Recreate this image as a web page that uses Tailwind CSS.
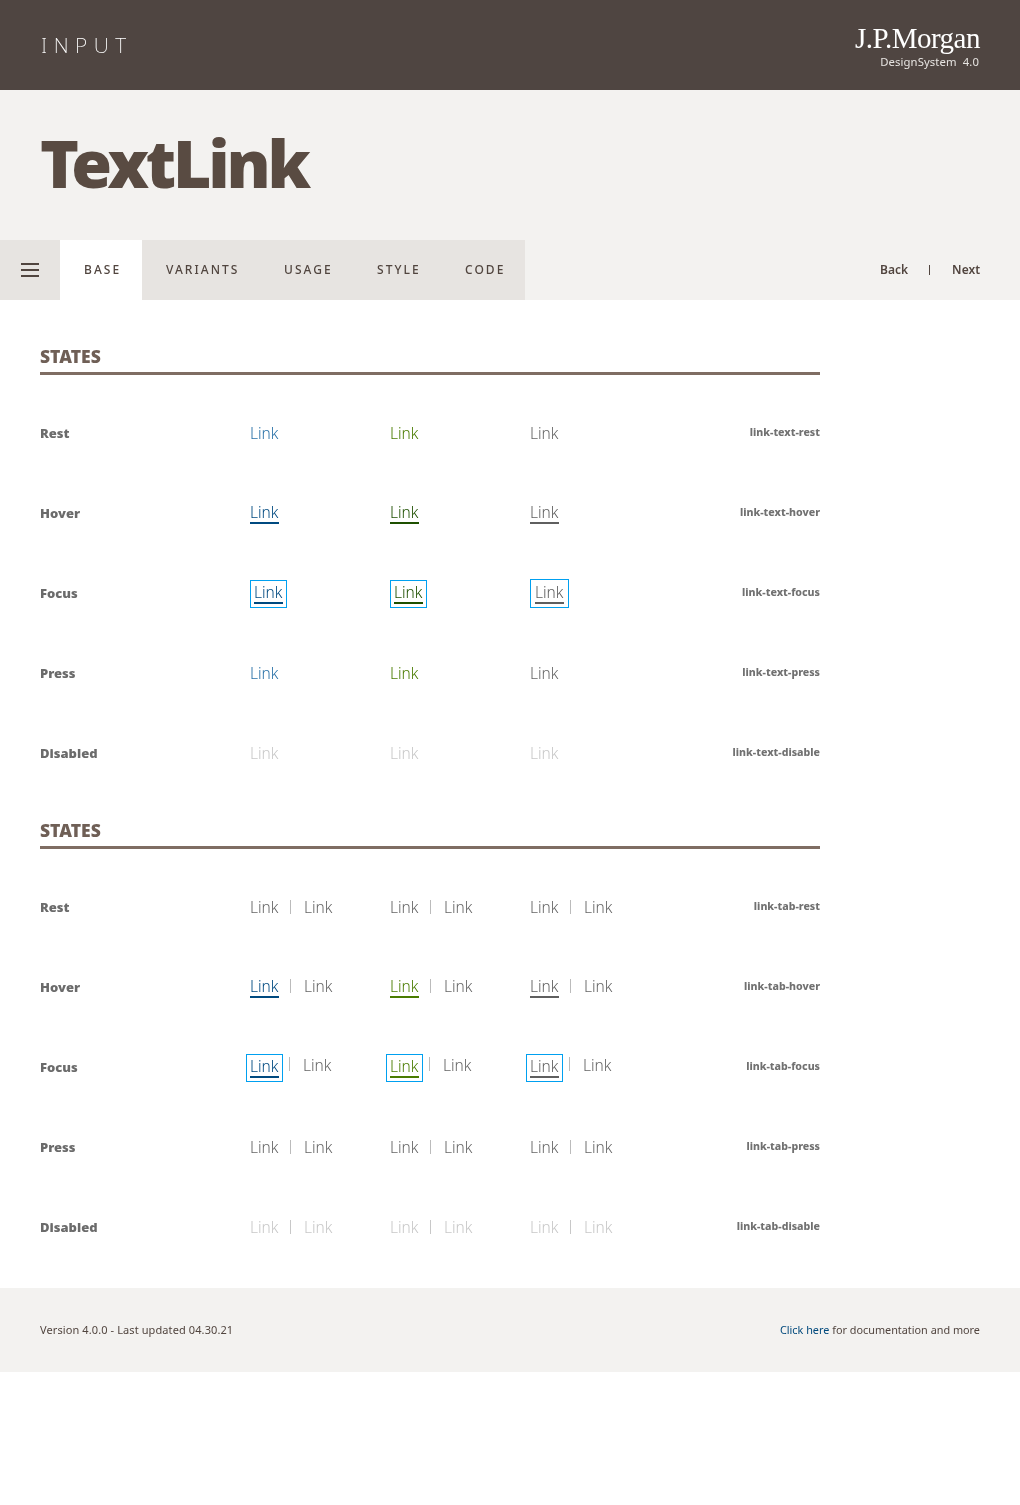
<!DOCTYPE html>
<html lang="en">
<head>
  <meta charset="UTF-8" />
  <title>TextLink</title>
  <script src="https://cdn.jsdelivr.net/npm/@tailwindcss/browser@4"></script>
</head>
<body class="bg-white font-['Noto_Sans',sans-serif] text-[#51453f]">
<div class="will-change-transform">

  <!-- Top bar -->
  <header class="h-[90px] bg-[#4f4541] flex items-center justify-between px-10 text-white">
    <div class="text-[21px] font-extralight tracking-[0.31em] pl-px pt-[2px]">INPUT</div>
    <div class="flex flex-col items-end">
      <div class="font-['Liberation_Serif',serif] text-[29px] leading-[30px] tracking-[-0.5px] mt-[2px]">J.P.Morgan</div>
      <div class="text-[11.3px] leading-4 tracking-[0.1px] mt-[1px] mr-px text-[#e7e4e1] whitespace-pre">DesignSystem  4.0</div>
    </div>
  </header>

  <!-- Title -->
  <div class="h-[150px] bg-[#f3f2f0] px-10 flex items-center">
    <h1 class="font-black text-[66px] leading-none tracking-[-3.2px] text-[#594b42] mt-[-7px]">TextLink</h1>
  </div>

  <!-- Tabs -->
  <nav class="h-[60px] bg-[#f3f2f0] flex items-center justify-between pr-10">
    <div class="flex h-full bg-[#e7e4e1] text-xs font-medium tracking-[0.17em] items-center">
      <div class="w-[60px] h-full flex items-center justify-center">
        <svg width="18" height="14" viewBox="0 0 18 14" fill="#51453f"><rect y="0" width="18" height="2"/><rect y="6" width="18" height="2"/><rect y="12" width="18" height="2"/></svg>
      </div>
      <div class="w-[82px] h-full bg-white flex items-center pl-6">BASE</div>
      <div class="w-[118px] h-full flex items-center pl-6">VARIANTS</div>
      <div class="w-[93px] h-full flex items-center pl-6">USAGE</div>
      <div class="w-[88px] h-full flex items-center pl-6">STYLE</div>
      <div class="w-[84px] h-full flex items-center pl-6">CODE</div>
    </div>
    <div class="flex items-center text-xs font-semibold">
      <span>Back</span>
      <span class="w-px h-[10px] bg-[#51453f] ml-[21px] mr-[22px]"></span>
      <span>Next</span>
    </div>
  </nav>

  <main class="w-[820px] pl-10 pt-[46px]">

    <!-- Text links -->
    <h2 class="font-black text-[17.5px] leading-5 text-[#6f5f56]">STATES</h2>
    <div class="h-[3px] bg-[#7f6d63] mt-[6px] mb-[18px]"></div>

    <div class="grid grid-cols-[210px_140px_140px_140px_1fr] h-20 items-center">
      <div class="text-[13px] font-black text-[#6b6b6b] pt-[2px]">Rest</div>
      <div class="text-[15.5px] font-[350] leading-5 text-[#2a72a8]">Link</div>
      <div class="text-[15.5px] font-[350] leading-5 text-[#4a7c00]">Link</div>
      <div class="text-[15.5px] font-[350] leading-5 text-[#666666]">Link</div>
      <div class="text-[10.6px] font-extrabold text-right text-[#717171]">link-text-rest</div>
    </div>
    <div class="grid grid-cols-[210px_140px_140px_140px_1fr] h-20 items-center">
      <div class="text-[13px] font-black text-[#6b6b6b] pt-[2px]">Hover</div>
      <div><span class="block w-[29px] text-[15.5px] font-[350] leading-5 border-b-2 text-[#004a80] border-[#004a80]">Link</span></div>
      <div><span class="block w-[29px] text-[15.5px] font-[350] leading-5 border-b-2 text-[#1e5000] border-[#1e5000]">Link</span></div>
      <div><span class="block w-[29px] text-[15.5px] font-[350] leading-5 border-b-2 text-[#5f5f5f] border-[#5f5f5f]">Link</span></div>
      <div class="text-[10.6px] font-extrabold text-right text-[#717171]">link-text-hover</div>
    </div>
    <div class="grid grid-cols-[210px_140px_140px_140px_1fr] h-20 items-center">
      <div class="text-[13px] font-black text-[#6b6b6b] pt-[2px]">Focus</div>
      <div><span class="block w-[37px] mt-px border border-[#00a0f0] px-[3px] pt-px pb-[3px]"><span class="block text-[15.5px] font-[350] leading-5 border-b-2 text-[#004a80] border-[#004a80] h-[22px]">Link</span></span></div>
      <div><span class="block w-[37px] mt-px border border-[#00a0f0] px-[3px] pt-px pb-[3px]"><span class="block text-[15.5px] font-[350] leading-5 border-b-2 text-[#1e5000] border-[#1e5000] h-[22px]">Link</span></span></div>
      <div><span class="block w-[39px] border border-[#00a0f0] px-1 pt-[2px] pb-[3px]"><span class="block text-[15.5px] font-[350] leading-5 border-b-2 text-[#5f5f5f] border-[#5f5f5f] h-[22px]">Link</span></span></div>
      <div class="text-[10.6px] font-extrabold text-right text-[#717171]">link-text-focus</div>
    </div>
    <div class="grid grid-cols-[210px_140px_140px_140px_1fr] h-20 items-center">
      <div class="text-[13px] font-black text-[#6b6b6b] pt-[2px]">Press</div>
      <div class="text-[15.5px] font-[350] leading-5 text-[#2a72a8]">Link</div>
      <div class="text-[15.5px] font-[350] leading-5 text-[#4a7c00]">Link</div>
      <div class="text-[15.5px] font-[350] leading-5 text-[#666666]">Link</div>
      <div class="text-[10.6px] font-extrabold text-right text-[#717171]">link-text-press</div>
    </div>
    <div class="grid grid-cols-[210px_140px_140px_140px_1fr] h-20 items-center">
      <div class="text-[13px] font-black text-[#6b6b6b] pt-[2px]">Disabled</div>
      <div class="text-[15.5px] font-[350] leading-5 text-[#c8c8c8]">Link</div>
      <div class="text-[15.5px] font-[350] leading-5 text-[#c8c8c8]">Link</div>
      <div class="text-[15.5px] font-[350] leading-5 text-[#c8c8c8]">Link</div>
      <div class="text-[10.6px] font-extrabold text-right text-[#717171]">link-text-disable</div>
    </div>

    <!-- Tab links -->
    <h2 class="font-black text-[17.5px] leading-5 text-[#6f5f56] mt-[27px]">STATES</h2>
    <div class="h-[3px] bg-[#7f6d63] mt-[6px] mb-[18px]"></div>

    <div class="grid grid-cols-[210px_140px_140px_140px_1fr] h-20 items-center">
      <div class="text-[13px] font-black text-[#6b6b6b] pt-[2px]">Rest</div>
      <div class="flex items-center text-[15.5px] font-[350] leading-5 text-[#666666]"><span class="w-[29px]">Link</span><span class="w-px h-[14px] bg-[#bbbbbb] ml-[11px] mr-[13px]"></span><span>Link</span></div>
      <div class="flex items-center text-[15.5px] font-[350] leading-5 text-[#666666]"><span class="w-[29px]">Link</span><span class="w-px h-[14px] bg-[#bbbbbb] ml-[11px] mr-[13px]"></span><span>Link</span></div>
      <div class="flex items-center text-[15.5px] font-[350] leading-5 text-[#666666]"><span class="w-[29px]">Link</span><span class="w-px h-[14px] bg-[#bbbbbb] ml-[11px] mr-[13px]"></span><span>Link</span></div>
      <div class="text-[10.6px] font-extrabold text-right text-[#717171]">link-tab-rest</div>
    </div>
    <div class="grid grid-cols-[210px_140px_140px_140px_1fr] h-20 items-center">
      <div class="text-[13px] font-black text-[#6b6b6b] pt-[2px]">Hover</div>
      <div class="flex items-start text-[15.5px] font-[350] leading-5 text-[#666666]"><span class="w-[29px] border-b-2 text-[#004a80] border-[#004a80]">Link</span><span class="w-px h-[14px] bg-[#bbbbbb] ml-[11px] mr-[13px] mt-[3px]"></span><span>Link</span></div>
      <div class="flex items-start text-[15.5px] font-[350] leading-5 text-[#666666]"><span class="w-[29px] border-b-2 text-[#4a7c00] border-[#4a7c00]">Link</span><span class="w-px h-[14px] bg-[#bbbbbb] ml-[11px] mr-[13px] mt-[3px]"></span><span>Link</span></div>
      <div class="flex items-start text-[15.5px] font-[350] leading-5 text-[#666666]"><span class="w-[29px] border-b-2 text-[#5f5f5f] border-[#5f5f5f]">Link</span><span class="w-px h-[14px] bg-[#bbbbbb] ml-[11px] mr-[13px] mt-[3px]"></span><span>Link</span></div>
      <div class="text-[10.6px] font-extrabold text-right text-[#717171]">link-tab-hover</div>
    </div>
    <div class="grid grid-cols-[210px_140px_140px_140px_1fr] h-20 items-center">
      <div class="text-[13px] font-black text-[#6b6b6b] pt-[2px]">Focus</div>
      <div class="flex items-start text-[15.5px] font-[350] leading-5 text-[#666666] ml-[-4px] mt-px"><span class="block w-[37px] border border-[#00a0f0] px-[3px] pt-px pb-[3px]"><span class="block border-b-2 h-[22px] text-[#004a80] border-[#004a80]">Link</span></span><span class="w-px h-[14px] bg-[#bbbbbb] ml-[6px] mr-[13px] mt-[3px]"></span><span class="mt-px">Link</span></div>
      <div class="flex items-start text-[15.5px] font-[350] leading-5 text-[#666666] ml-[-4px] mt-px"><span class="block w-[37px] border border-[#00a0f0] px-[3px] pt-px pb-[3px]"><span class="block border-b-2 h-[22px] text-[#4a7c00] border-[#4a7c00]">Link</span></span><span class="w-px h-[14px] bg-[#bbbbbb] ml-[6px] mr-[13px] mt-[3px]"></span><span class="mt-px">Link</span></div>
      <div class="flex items-start text-[15.5px] font-[350] leading-5 text-[#666666] ml-[-4px] mt-px"><span class="block w-[37px] border border-[#00a0f0] px-[3px] pt-px pb-[3px]"><span class="block border-b-2 h-[22px] text-[#5f5f5f] border-[#5f5f5f]">Link</span></span><span class="w-px h-[14px] bg-[#bbbbbb] ml-[6px] mr-[13px] mt-[3px]"></span><span class="mt-px">Link</span></div>
      <div class="text-[10.6px] font-extrabold text-right text-[#717171]">link-tab-focus</div>
    </div>
    <div class="grid grid-cols-[210px_140px_140px_140px_1fr] h-20 items-center">
      <div class="text-[13px] font-black text-[#6b6b6b] pt-[2px]">Press</div>
      <div class="flex items-center text-[15.5px] font-[350] leading-5 text-[#666666]"><span class="w-[29px]">Link</span><span class="w-px h-[14px] bg-[#bbbbbb] ml-[11px] mr-[13px]"></span><span>Link</span></div>
      <div class="flex items-center text-[15.5px] font-[350] leading-5 text-[#666666]"><span class="w-[29px]">Link</span><span class="w-px h-[14px] bg-[#bbbbbb] ml-[11px] mr-[13px]"></span><span>Link</span></div>
      <div class="flex items-center text-[15.5px] font-[350] leading-5 text-[#666666]"><span class="w-[29px]">Link</span><span class="w-px h-[14px] bg-[#bbbbbb] ml-[11px] mr-[13px]"></span><span>Link</span></div>
      <div class="text-[10.6px] font-extrabold text-right text-[#717171]">link-tab-press</div>
    </div>
    <div class="grid grid-cols-[210px_140px_140px_140px_1fr] h-20 items-center">
      <div class="text-[13px] font-black text-[#6b6b6b] pt-[2px]">Disabled</div>
      <div class="flex items-center text-[15.5px] font-[350] leading-5 text-[#c8c8c8]"><span class="w-[29px]">Link</span><span class="w-px h-[14px] bg-[#c8c8c8] ml-[11px] mr-[13px]"></span><span>Link</span></div>
      <div class="flex items-center text-[15.5px] font-[350] leading-5 text-[#c8c8c8]"><span class="w-[29px]">Link</span><span class="w-px h-[14px] bg-[#c8c8c8] ml-[11px] mr-[13px]"></span><span>Link</span></div>
      <div class="flex items-center text-[15.5px] font-[350] leading-5 text-[#c8c8c8]"><span class="w-[29px]">Link</span><span class="w-px h-[14px] bg-[#c8c8c8] ml-[11px] mr-[13px]"></span><span>Link</span></div>
      <div class="text-[10.6px] font-extrabold text-right text-[#717171]">link-tab-disable</div>
    </div>
  </main>

  <footer class="h-[84px] mt-[21px] bg-[#f3f2f0] px-10 flex items-center justify-between text-[#51453f]">
    <div class="text-[11px] tracking-[0.1px]">Version 4.0.0 - Last updated 04.30.21</div>
    <div class="text-[10.85px]"><span class="text-[#00497c]">Click here</span> for documentation and more</div>
  </footer>
</div>
</body>
</html>
